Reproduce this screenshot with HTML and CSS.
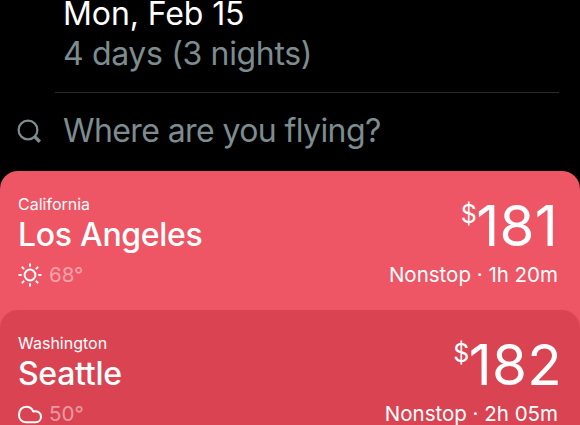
FILE: index.html
```html
<!DOCTYPE html>
<html lang="en">
<head>
  <meta charset="UTF-8">
  <meta name="viewport" content="width=device-width, initial-scale=1.0">
  <title>Flights</title>
  <link rel="stylesheet" href="styles.css">
</head>
<body>
  <div class="trip">
    <div class="date">Mon, Feb 15</div>
    <div class="length">4 days (3 nights)</div>
  </div>

  <div class="search">
    <svg class="search-icon" width="26" height="26" viewBox="0 0 26 26" fill="none" stroke="#7d8c8e">
      <circle cx="11" cy="11" r="9.4" stroke-width="2.2"/>
      <path d="M17.3 17.3L22.8 22.8" stroke-width="3.4"/>
    </svg>
    <span class="placeholder">Where are you flying?</span>
  </div>

  <div class="card card-la">
    <div class="place">
      <div class="state">California</div>
      <div class="city">Los Angeles</div>
      <div class="weather">
        <svg width="26" height="26" viewBox="0 0 26 26" fill="none" stroke="#fff" stroke-width="2" stroke-linecap="round">
          <circle cx="13" cy="13" r="5.4"/>
          <path d="M13 2.3v1.6M13 22.1v1.6M2.3 13h1.6M22.1 13h1.6M5.4 5.4l1.2 1.2M19.4 19.4l1.2 1.2M5.4 20.6l1.2-1.2M19.4 6.6l1.2-1.2"/>
        </svg>
        <span class="temp">68°</span>
      </div>
    </div>
    <div class="fare">
      <div class="price"><span class="currency">$</span>181</div>
      <div class="flight">Nonstop · 1h 20m</div>
    </div>
  </div>

  <div class="card card-seattle">
    <div class="place">
      <div class="state">Washington</div>
      <div class="city">Seattle</div>
      <div class="weather">
        <svg width="26" height="26" viewBox="0 0 26 26" fill="none" stroke="#fff" stroke-width="2" stroke-linejoin="round">
          <path d="M8.7 21.2C4.8 21.2 2 18.1 2 13.9C2 9.1 5 5.7 9.2 5.7C12.6 5.7 15 7.5 16.2 10.4C20.7 9.4 24 12 24 15.7C24 18.9 21.8 21.2 18.6 21.2Z"/>
        </svg>
        <span class="temp">50°</span>
      </div>
    </div>
    <div class="fare">
      <div class="price">
        <span class="currency">$</span>182
      </div>
      <div class="flight">Nonstop · 2h 05m</div>
    </div>
  </div>
</body>
</html>
```
FILE: styles.css
```css
body {
  display: flow-root;
  margin: 0;
  height: 425px;
  overflow: hidden;
  background-color: #000;
  color: #fff;
  font-family: Inter, "Liberation Sans", sans-serif;
  white-space: nowrap;
}
.trip {
  margin: 0 21px 0 55px;
  padding: 0 0 18px 8px;
  border-bottom: 1px solid #2c2c2c;
  font-size: 32px;
  line-height: 40px;
}
.date {
  line-height: 28px;
  padding-bottom: 6px;
  letter-spacing: -0.1px;
}
.length, .placeholder {
  color: #7d8c8e;
}
.length {
  letter-spacing: -0.35px;
}
.placeholder {
  letter-spacing: -0.6px;
}
.search {
  display: flex;
  align-items: center;
  box-sizing: border-box;
  height: 78px;
  padding: 0 0 2px 17px;
  font-size: 32px;
  line-height: 40px;
}
.search-icon {
  margin: 2px 20px 0 0;
}
.card {
  display: flex;
  justify-content: space-between;
  box-sizing: border-box;
  height: 157px;
  padding: 23px 22px 0 18px;
  border-radius: 18px 18px 0 0;
}
.card-la {
  background-color: #ee5565;
}
.card-seattle {
  margin-top: -18px;
  height: 133px;
  background-color: #da4452;
}
.state {
  font-size: 16px;
  line-height: 20px;
}
.city {
  padding-top: 1px;
  font-size: 32px;
  font-weight: 500;
  line-height: 40px;
  letter-spacing: -0.3px;
}
.weather {
  display: flex;
  align-items: center;
  margin: 7px 0 0 -1px;
  height: 26px;
}
.temp {
  margin: -2px 0 0 6px;
  font-size: 20.5px;
  opacity: 0.45;
}
.fare {
  text-align: right;
}
.price {
  display: flex;
  justify-content: flex-end;
  padding-top: 1px;
  font-size: 56.5px;
  line-height: 62px;
  letter-spacing: 0.3px;
}
.card-seattle .price {
  margin-right: -4px;
}
.currency {
  margin-right: -1px;
  font-size: 25px;
  line-height: 38px;
}
.flight {
  margin-top: 6px;
  font-size: 20.5px;
  line-height: 24px;
}
```
